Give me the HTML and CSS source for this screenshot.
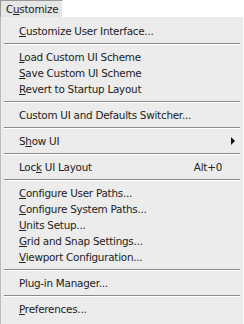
FILE: index.html
```html
<!DOCTYPE html>
<html lang="en">
<head>
    <meta charset="UTF-8">
    <title>Customize menu</title>
    <link rel="stylesheet" href="styles.css">
</head>
<body>
    <div class="menubar">
        <span class="tab">C<u>u</u>stomize</span>
    </div>
    <ul class="menu">
        <li class="item"><span><u>C</u>ustomize User Interface...</span></li>
        <li class="sep"></li>
        <li class="item"><span><u>L</u>oad Custom UI Scheme</span></li>
        <li class="item"><span><u>S</u>ave Custom UI Scheme</span></li>
        <li class="item"><span><u>R</u>evert to Startup Layout</span></li>
        <li class="sep"></li>
        <li class="item"><span>Custom UI and Defaults Switcher...</span></li>
        <li class="sep"></li>
        <li class="item"><span>S<u>h</u>ow UI</span><span class="arrow"></span></li>
        <li class="sep"></li>
        <li class="item"><span>Loc<u>k</u> UI Layout</span><span class="key">Alt+0</span></li>
        <li class="sep"></li>
        <li class="item"><span><u>C</u>onfigure User Paths...</span></li>
        <li class="item"><span><u>C</u>onfigure System Paths...</span></li>
        <li class="item"><span><u>U</u>nits Setup...</span></li>
        <li class="item"><span><u>G</u>rid and Snap Settings...</span></li>
        <li class="item group-end"><span><u>V</u>iewport Configuration...</span></li>
        <li class="sep"></li>
        <li class="item"><span>Plug-in Manager...</span></li>
        <li class="sep"></li>
        <li class="item"><span><u>P</u>references...</span></li>
    </ul>
</body>
</html>
```

FILE: styles.css
```css
body {
    margin: 0;
    background: #fff;
    font-family: "DejaVu Sans", Verdana, sans-serif;
    font-size: 10.4px;
    letter-spacing: -0.25px;
    color: #222;
    overflow: hidden;
}

.menubar {
    height: 17px;
    display: flex;
}

.tab {
    width: 56px;
    padding: 1px 0 0 5px;
    background: #e6e6e6;
    border-top: 1px solid #999;
    border-left: 1px solid #999;
    border-right: 1px solid #fff;
    line-height: 15px;
}

.menu {
    list-style: none;
    margin: 0;
    padding: 6px 2px 0 2px;
    background: #ececec;
    border-left: 1px solid #bbb;
    border-right: 1px solid #fafafa;
    height: 400px;
}

.item {
    display: flex;
    align-items: center;
    height: 16px;
    padding-left: 16px;
    padding-right: 6px;
}

.key {
    margin-left: auto;
    margin-right: 13px;
}

.arrow {
    margin-left: auto;
    width: 0;
    height: 0;
    border-top: 4px solid transparent;
    border-bottom: 4px solid transparent;
    border-left: 4px solid #111;
}

.sep {
    height: 1px;
    margin: 4px 1px 4px;
    background: #8a8a8a;
    border-bottom: 1px solid #fff;
}

.sep + .item {
    margin-top: 1px;
}

.group-end {
    margin-bottom: 1px;
}
```
